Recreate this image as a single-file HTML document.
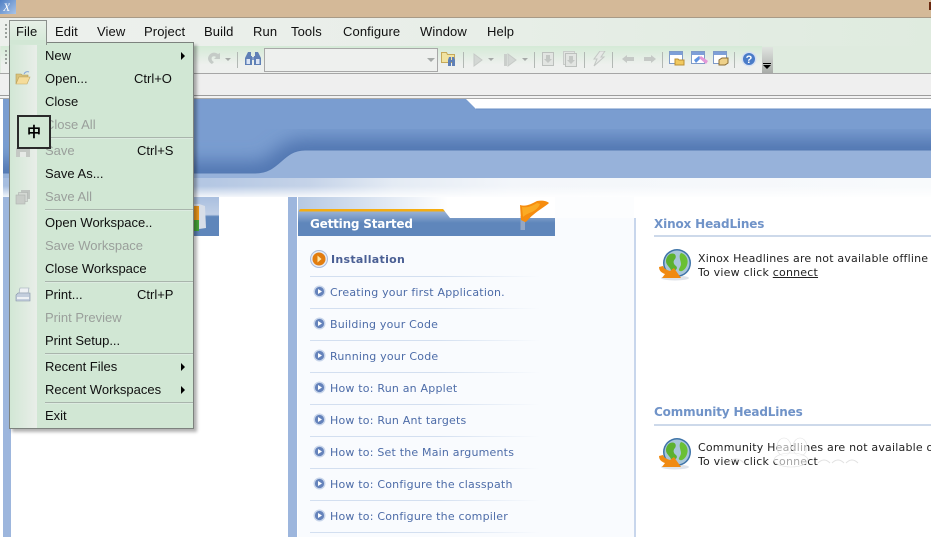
<!DOCTYPE html>
<html><head><meta charset="utf-8"><style>
html,body{margin:0;padding:0;width:931px;height:537px;overflow:hidden;background:#fff}
#w{position:absolute;left:0;top:0;width:931px;height:537px;overflow:hidden}
.a{position:absolute}
.t{position:absolute;white-space:nowrap;line-height:16px;height:16px}
.m{font:13px "Liberation Sans",sans-serif;color:#101010;letter-spacing:.1px}
.i{font:13px "Liberation Sans",sans-serif;color:#101010;letter-spacing:0;left:45px}
.d{color:#9a9f9b}
.s{position:absolute;left:45px;width:148px;height:1px;background:#a9b5ac;border-bottom:1px solid #dcebe0}
.k{font:13px "Liberation Sans",sans-serif;color:#101010;letter-spacing:0}
.l{font:11px "DejaVu Sans",sans-serif;color:#4d6ca8;left:330px;letter-spacing:.2px}
.r{position:absolute;left:310px;width:230px;height:1px;background:linear-gradient(90deg,#d3dff0 55%,#f9fbfe)}
.b{font:bold 12px "DejaVu Sans",sans-serif;color:#7093c8;left:654px;letter-spacing:-.15px}
.x{font:11px "DejaVu Sans",sans-serif;color:#222;left:698px;letter-spacing:.2px;width:233px;overflow:hidden}
.v{position:absolute;width:1px;height:16px;top:52px;background:#b2b8b4}
.ar{position:absolute;width:0;height:0;border-left:4px solid #000;border-top:4px solid transparent;border-bottom:4px solid transparent;left:181px}
.dd{position:absolute;top:58px;width:0;height:0;border-top:3px solid #a6aaa8;border-left:3px solid transparent;border-right:3px solid transparent}
svg{position:absolute;overflow:hidden}
</style></head><body><div id="w">
<div class="a" style="left:0;top:0;width:931px;height:18px;background:#d4b998;border-bottom:1px solid #a89a86;box-sizing:border-box"></div>
<div class="a" style="left:0;top:0;width:16px;height:14px;background:linear-gradient(135deg,#4f7fc4,#a9c4e8)"></div>
<div class="t" style="left:3px;top:0;font:italic 12px 'Liberation Serif',serif;color:#fff;height:14px;overflow:hidden">X</div>
<div class="a" style="left:928px;top:2px;width:3px;height:8px;border-right:0;background:linear-gradient(90deg,transparent 33%,#6b2a10 33%)"></div>

<!-- menu bar -->
<div class="a" style="left:0;top:18px;width:931px;height:28px;background:linear-gradient(90deg,#edf0ed,#e8eee8 50%,#dfebdf)"></div>
<div class="a" style="left:5px;top:24px;width:2px;height:14px;background:repeating-linear-gradient(180deg,#9aa09c 0 2px,transparent 2px 4px)"></div>
<div class="t m" style="left:55px;top:24px">Edit</div>
<div class="t m" style="left:97px;top:24px">View</div>
<div class="t m" style="left:144px;top:24px">Project</div>
<div class="t m" style="left:204px;top:24px">Build</div>
<div class="t m" style="left:253px;top:24px">Run</div>
<div class="t m" style="left:291px;top:24px">Tools</div>
<div class="t m" style="left:343px;top:24px">Configure</div>
<div class="t m" style="left:420px;top:24px">Window</div>
<div class="t m" style="left:487px;top:24px">Help</div>

<!-- toolbar -->
<div class="a" style="left:0;top:46px;width:931px;height:27px;background:#dfebdf"></div>
<div class="a" style="left:1px;top:46px;width:761px;height:27px;background:linear-gradient(180deg,#d4ead6,#eef0ee 70%)"></div>
<div class="a" style="left:5px;top:50px;width:2px;height:14px;background:repeating-linear-gradient(180deg,#9aa09c 0 2px,transparent 2px 4px)"></div>
<div class="a" style="left:762px;top:47px;width:11px;height:26px;background:linear-gradient(180deg,#dfe3df,#a9aca9)"></div>
<div class="a" style="left:763px;top:63px;width:8px;height:1px;background:#000"></div>
<div class="a" style="left:763px;top:65px;width:0;height:0;border-top:4px solid #000;border-left:4px solid transparent;border-right:4px solid transparent"></div>
<div class="a" style="left:0;top:73px;width:931px;height:1px;background:#a6a6a6"></div>
<div class="a" style="left:0;top:74px;width:931px;height:21px;background:#efefef"></div>
<div class="a" style="left:0;top:95px;width:931px;height:1px;background:#9c9c9c"></div>
<div class="a" style="left:0;top:96px;width:931px;height:2px;background:#f2f2f2"></div>
<div class="a" style="left:0;top:98px;width:931px;height:1px;background:#a9a9a9"></div>

<svg style="left:205px;top:50px" width="18" height="18"><path d="M13 4C9 1 4 3 3 8c0 3 2 5 4 6l2-2c-2-1-3-3-2-5 1-1 3-1 4 0l-2 2h6V3z" fill="#c5cbc7"/></svg>
<div class="dd" style="left:225px"></div>
<div class="v" style="left:237px"></div>
<svg style="left:245px;top:51px" width="16" height="15"><path d="M3 1h3v4h1v9H0V7z" fill="#5f80b6"/><path d="M10 1h3l3 6v7H9V5h1z" fill="#5f80b6"/><rect x="7" y="6" width="2" height="3" fill="#7f9bc8"/><rect x="1.500" y="8" width="3.500" height="5" fill="#dbe5f5"/><rect x="11" y="8" width="3.500" height="5" fill="#dbe5f5"/></svg>
<div class="a" style="left:264px;top:48px;width:172px;height:22px;border:1px solid #a8a8a8;background:#eef0ee"></div>
<div class="dd" style="left:427px;top:58px;border-top-width:4px;border-left-width:4px;border-right-width:4px"></div>
<svg style="left:441px;top:51px" width="17" height="16"><path d="M.5 1.500h5l1 2h7v8H.5z" fill="#f1e3a0" stroke="#c6a95a"/><path d="M7 9l1-3h2v3h1V6h2l1 3v6h-3v-4h-1v4H7z" fill="#5f80b6"/></svg>
<div class="v" style="left:463px"></div>
<svg style="left:472px;top:52px" width="12" height="16"><path d="M2 2l8 6-8 6z" fill="#d3d7d4" stroke="#c6cac7"/></svg>
<div class="dd" style="left:488px"></div>
<svg style="left:504px;top:52px" width="14" height="16"><rect x="0" y="2" width="3" height="12" fill="#cacecb"/><path d="M4 2l8 6-8 6z" fill="#d3d7d4" stroke="#c6cac7"/></svg>
<div class="dd" style="left:522px"></div>
<div class="v" style="left:534px"></div>
<svg style="left:542px;top:52px" width="13" height="15"><rect x=".5" y=".5" width="11" height="13" fill="#e2e5e2" stroke="#bcc0bd"/><path d="M4 3h4v4h2l-4 4-4-4h2z" fill="#c3c7c4"/></svg>
<svg style="left:563px;top:51px" width="15" height="16"><rect x=".5" y=".5" width="11" height="13" fill="#e2e5e2" stroke="#c8ccc9"/><rect x="2.500" y="2.500" width="11" height="13" fill="#e2e5e2" stroke="#bcc0bd"/><path d="M6 5h4v4h2l-4 4-4-4h2z" fill="#c3c7c4"/></svg>
<div class="v" style="left:584px"></div>
<svg style="left:592px;top:51px" width="14" height="16"><path d="M8 0h5L9 6h3L2 15l3-7H2z" fill="#e6e9e6" stroke="#c3c7c4"/></svg>
<div class="v" style="left:612px"></div>
<svg style="left:622px;top:54px" width="13" height="10"><path d="M0 5l5-4v2h7v4H5v2z" fill="#c5c9c6"/></svg>
<svg style="left:644px;top:54px" width="13" height="10"><path d="M12 5L7 1v2H0v4h7v2z" fill="#c5c9c6"/></svg>
<div class="v" style="left:662px"></div>
<svg style="left:669px;top:51px" width="16" height="15"><rect x=".5" y=".5" width="13" height="12" fill="#fff" stroke="#7f9bc8"/><rect x="1" y="1" width="12" height="3" fill="#7d9fd8"/><path d="M6 8h3l1 1h5v5H6z" fill="#f1c95f" stroke="#b98f35"/></svg>
<svg style="left:691px;top:51px" width="18" height="15"><rect x=".5" y=".5" width="13" height="12" fill="#fff" stroke="#7f9bc8"/><rect x="1" y="1" width="12" height="3" fill="#7d9fd8"/><path d="M3 9l5-4 2 2-5 5z" fill="#5d93e0"/><path d="M8 7l2-2 7 5-2 3z" fill="#e39ad9"/></svg>
<svg style="left:713px;top:51px" width="16" height="15"><rect x=".5" y=".5" width="13" height="12" fill="#fff" stroke="#7f9bc8"/><rect x="1" y="1" width="12" height="3" fill="#7d9fd8"/><path d="M6 9l3-2h6v5l-3 2H6z" fill="#eed18a" stroke="#8a6d35"/></svg>
<div class="v" style="left:734px"></div>
<svg style="left:741px;top:51px" width="16" height="16"><circle cx="8" cy="8" r="7.500" fill="#d5e0f2"/><circle cx="8" cy="8" r="6" fill="#4a7cc8"/><text x="8" y="12" text-anchor="middle" font-family="Liberation Sans,sans-serif" font-weight="bold" font-size="11" fill="#fff">?</text></svg>

<!-- content banner -->
<div class="a" style="left:3px;top:140px;width:928px;height:38px;background:#97b2da"></div>
<svg style="left:0;top:0" width="931" height="180">
<defs>
<clipPath id="bc"><path d="M3 99H466L476 109H931V150H305C282 150 280 173 255 173H3z"/></clipPath>
<filter id="bf" x="-5%" y="-100%" width="110%" height="300%"><feGaussianBlur stdDeviation="9"/></filter>
</defs>
<path d="M3 99H466L476 109H931V150H305C282 150 280 173 255 173H3z" fill="#7a9dd0"/>
<g clip-path="url(#bc)"><path d="M-40 175H255C280 175 282 152 305 152H980" fill="none" stroke="#4f74b0" stroke-width="26" filter="url(#bf)"/></g>
<path d="M3 173H255C280 173 282 150 305 150H931" fill="none" stroke="#5479b3" stroke-width="1"/>
<path d="M476 109H931" stroke="#6a8fc6" stroke-width="1"/>
</svg>
<div class="a" style="left:3px;top:178px;width:928px;height:19px;background:linear-gradient(90deg,#a6bde0,#b4c7e3 22%,#c5d3e8 33%,#e4ebf4 42%,#f3f6fa 55%,#f8fafc)"></div>
<div class="a" style="left:3px;top:186px;width:928px;height:11px;background:linear-gradient(180deg,rgba(255,255,255,0),rgba(255,255,255,.85))"></div>

<!-- left strip & panels -->
<div class="a" style="left:3px;top:197px;width:8px;height:340px;background:#9db6dd"></div>
<div class="a" style="left:11px;top:197px;width:277px;height:340px;background:#fff"></div>
<div class="a" style="left:193px;top:197px;width:26px;height:39px;background:linear-gradient(180deg,#a9bfdf,#c0cfe6 45%,#5f86bb 50%,#5f86bb)"></div>
<svg style="left:190px;top:200px" width="18" height="34"><path d="M0 4h9l6 2 1 22-7 1H0z" fill="#d8dee8"/><path d="M0 6h9v16H0z" fill="#f09a1d"/><path d="M0 20h9v11H0z" fill="#47a83a"/></svg>
<div class="a" style="left:288px;top:197px;width:10px;height:340px;background:#9db6dd"></div>
<div class="a" style="left:297px;top:197px;width:1px;height:340px;background:#fff"></div>
<div class="a" style="left:298px;top:197px;width:336px;height:340px;background:#f9fbfe"></div>
<div class="a" style="left:634px;top:218px;width:2px;height:319px;background:#c8d6ec"></div>
<div class="a" style="left:555px;top:197px;width:79px;height:21px;background:#fcfdfe"></div>
<div class="a" style="left:298px;top:218px;width:257px;height:18px;background:#5f86bb"></div>
<svg style="left:298px;top:197px" width="258" height="40">
<defs><linearGradient id="tp" x1="0" y1="0" x2="1" y2="0"><stop offset="0" stop-color="#b6c9e3"/><stop offset="1" stop-color="#fff"/></linearGradient><linearGradient id="hd" x1="0" y1="0" x2="0" y2="1"><stop offset="0" stop-color="#a6bcdb"/><stop offset="1" stop-color="#5f86bb"/></linearGradient></defs>
<rect width="257" height="21" fill="#fff"/>
<rect width="150" height="13" fill="url(#tp)"/>
<path d="M0 14C0 13 1 12 2 12H145L152 21H257V26H0z" fill="url(#hd)"/>
<path d="M1 14.500C1 13 2 12 3 12H145l2 2.500z" fill="#f5ad12"/>
</svg>
<div class="t" style="left:310px;top:217px;font:bold 12px 'DejaVu Sans',sans-serif;color:#fff;letter-spacing:-.2px">Getting Started</div>
<svg style="left:518px;top:200px" width="34" height="34"><rect x="2.500" y="16" width="4.500" height="14" fill="#93a7c6"/><path d="M2 5C8 7 13 4 19 1 24 0 29 1 31 3 28 6 22 9 15 15 11 18 9 22 7 22L3 20z" fill="#f68c0e"/><path d="M4 7c6 1 10-1 15-4l3 1c-1 3-4 6-8 8-3 1-7 3-9 5z" fill="#fbab24"/></svg>

<!-- list -->
<div class="t" style="left:331px;top:253px;font:bold 11px 'DejaVu Sans',sans-serif;color:#4a5f94;letter-spacing:.3px">Installation</div>
<svg style="left:310px;top:250px" width="18" height="18"><circle cx="9" cy="9" r="8.500" fill="#e5ebf6" stroke="#a9bbdb"/><circle cx="9" cy="9" r="6.500" fill="#e27d0f"/><path d="M7.500 5.500l4 3.500-4 3.500z" fill="#ffe6a8"/></svg>
<div class="r" style="top:276px"></div>
<div class="t l" style="top:286px">Creating your first Application.</div>
<div class="r" style="top:308px"></div>
<div class="t l" style="top:318px">Building your Code</div>
<div class="r" style="top:340px"></div>
<div class="t l" style="top:350px">Running your Code</div>
<div class="r" style="top:372px"></div>
<div class="t l" style="top:382px">How to: Run an Applet</div>
<div class="r" style="top:404px"></div>
<div class="t l" style="top:414px">How to: Run Ant targets</div>
<div class="r" style="top:436px"></div>
<div class="t l" style="top:446px">How to: Set the Main arguments</div>
<div class="r" style="top:468px"></div>
<div class="t l" style="top:478px">How to: Configure the classpath</div>
<div class="r" style="top:500px"></div>
<div class="t l" style="top:510px">How to: Configure the compiler</div>
<div class="r" style="top:532px"></div>
<svg style="left:313px;top:285px" width="14" height="240">
<g id="b"><circle cx="6.500" cy="6.500" r="6" fill="#c8d5ea"/><circle cx="6.500" cy="6.500" r="4.600" fill="#6583bb"/><path d="M5 4l4 2.500L5 9z" fill="#fff"/></g>
<use href="#b" y="32"/><use href="#b" y="64"/><use href="#b" y="96"/><use href="#b" y="128"/><use href="#b" y="160"/><use href="#b" y="192"/><use href="#b" y="224"/>
</svg>

<!-- right -->
<div class="t b" style="top:217px">Xinox HeadLines</div>
<div class="a" style="left:654px;top:235px;width:277px;height:2px;background:#cdd9ea"></div>
<svg style="left:658px;top:248px" width="34" height="34">
<defs><g id="g"><ellipse cx="17" cy="30" rx="14" ry="2.500" fill="#dfe3e9"/><circle cx="19" cy="15" r="14" fill="#3f74a8"/><circle cx="19" cy="15" r="12.500" fill="#a8c6da"/><path d="M12 6c5-2 7 2 5 5-2 2-2 5 1 7 3 3-2 6-5 4-2-4-5-5-5-9 0-3 2-6 4-7z" fill="#5cb130"/><path d="M23 5c5 1 8 7 6 12-1 4-5 7-7 6-3-1 1-4 1-7 0-3-3-8 0-11z" fill="#6ac034"/><path d="M1 19c0 4 3 6 6 7l-3 4h19L16 20l-4 3c-3-1-6-2-7-5z" fill="#f08a12"/></g></defs>
<use href="#g"/></svg>
<div class="t x" style="top:252px">Xinox Headlines are not available offline</div>
<div class="t x" style="top:266px">To view click <span style="text-decoration:underline">connect</span></div>

<div class="t b" style="top:405px">Community HeadLines</div>
<div class="a" style="left:654px;top:424px;width:277px;height:2px;background:#cdd9ea"></div>
<svg style="left:658px;top:437px" width="34" height="34"><use href="#g"/></svg>
<div class="t x" style="top:441px">Community Headlines are not available o</div>
<div class="t x" style="top:455px">To view click connect</div>
<svg style="left:708px;top:436px" width="170" height="36"><g fill="#fff" fill-opacity=".6" stroke="#e2e2e2" stroke-width=".6"><ellipse cx="76" cy="11" rx="7" ry="9"/><ellipse cx="92" cy="11" rx="7" ry="9"/><ellipse cx="83" cy="24" rx="17" ry="7"/></g><path d="M20 27q8-8 16 0M110 27q6-6 12 0M124 27q6-6 12 0M138 27q6-6 12 0" stroke="#e2e2e2" fill="none"/></svg>

<!-- file menu -->
<div class="a" style="left:9px;top:42px;width:183px;height:385px;background:#d1e7d4;border:1px solid #7d827e;box-shadow:3px 3px 3px rgba(0,0,0,.3);z-index:2"></div>
<div class="a" style="left:10px;top:43px;width:27px;height:385px;background:linear-gradient(90deg,#d2e7d5,#e9eee9);z-index:2"></div>
<div class="a" style="left:9px;top:20px;width:36px;height:24px;background:linear-gradient(180deg,#e6efe6,#d3e8d6);border:1px solid #8b908c;border-bottom:none;z-index:3"></div>
<div class="a" style="left:10px;top:40px;width:35px;height:4px;background:#d2e7d5;z-index:3"></div>
<div style="position:absolute;left:0;top:0;z-index:4">
<div class="t m" style="left:16px;top:24px">File</div>
<div class="t i" style="top:48px">New</div><div class="ar" style="top:52px"></div>
<div class="t i" style="top:71px">Open...</div><div class="t k" style="left:134px;top:71px">Ctrl+O</div>
<div class="t i" style="top:94px">Close</div>
<div class="t i d" style="top:117px">Close All</div>
<div class="s" style="top:137px"></div>
<div class="t i d" style="top:143px">Save</div><div class="t k d" style="left:137px;top:143px">Ctrl+S</div>
<div class="t i" style="top:166px">Save As...</div>
<div class="t i d" style="top:189px">Save All</div>
<div class="s" style="top:209px"></div>
<div class="t i" style="top:215px">Open Workspace..</div>
<div class="t i d" style="top:238px">Save Workspace</div>
<div class="t i" style="top:261px">Close Workspace</div>
<div class="s" style="top:281px"></div>
<div class="t i" style="top:287px">Print...</div><div class="t k" style="left:137px;top:287px">Ctrl+P</div>
<div class="t i d" style="top:310px">Print Preview</div>
<div class="t i" style="top:333px">Print Setup...</div>
<div class="s" style="top:353px"></div>
<div class="t i" style="top:359px">Recent Files</div><div class="ar" style="top:363px"></div>
<div class="t i" style="top:382px">Recent Workspaces</div><div class="ar" style="top:386px"></div>
<div class="s" style="top:402px"></div>
<div class="t i" style="top:408px">Exit</div>
<svg style="left:15px;top:70px" width="16" height="16"><path d="M1 4h5l1 1h6v2H4L1 14z" fill="#d9c27a" stroke="#b39a55" stroke-width=".6"/><path d="M1 14l3-7h11l-3 7z" fill="#f5dc9a" stroke="#c2a765" stroke-width=".6"/><path d="M9 4c1-2 3-3 5-2" stroke="#88a8d8" fill="none"/></svg>
<svg style="left:16px;top:148px" width="15" height="9"><rect width="14" height="9" fill="#c4c8c4"/><rect x="4" y="4" width="6" height="5" fill="#e6e9e6"/></svg>
<svg style="left:15px;top:189px" width="16" height="16"><rect x="6" y="1" width="9" height="9" fill="#bfc4c0"/><rect x="3.500" y="3.500" width="9" height="9" fill="#d4d8d4" stroke="#aeb3af" stroke-width=".6"/><rect x="1" y="6" width="9" height="9" fill="#c8ccc8" stroke="#aeb3af" stroke-width=".6"/></svg>
<svg style="left:15px;top:287px" width="16" height="15"><path d="M5 1h9l-1 5H4z" fill="#eef1f4" stroke="#98a4b5" stroke-width=".6"/><path d="M3 6h12v8H1V8z" fill="#c3cedd" stroke="#8492a6" stroke-width=".6"/><rect x="2" y="10" width="12" height="2" fill="#eef1f4"/></svg>
</div>

<!-- IME box -->
<div class="a" style="left:17px;top:115px;width:30px;height:30px;border:2px solid #2a2a2a;background:#d1e7d4;z-index:5"></div>
<div class="t" style="left:27px;top:122px;z-index:6;font:bold 14px 'Noto Sans CJK SC',sans-serif;color:#000">中</div>
</div></body></html>
